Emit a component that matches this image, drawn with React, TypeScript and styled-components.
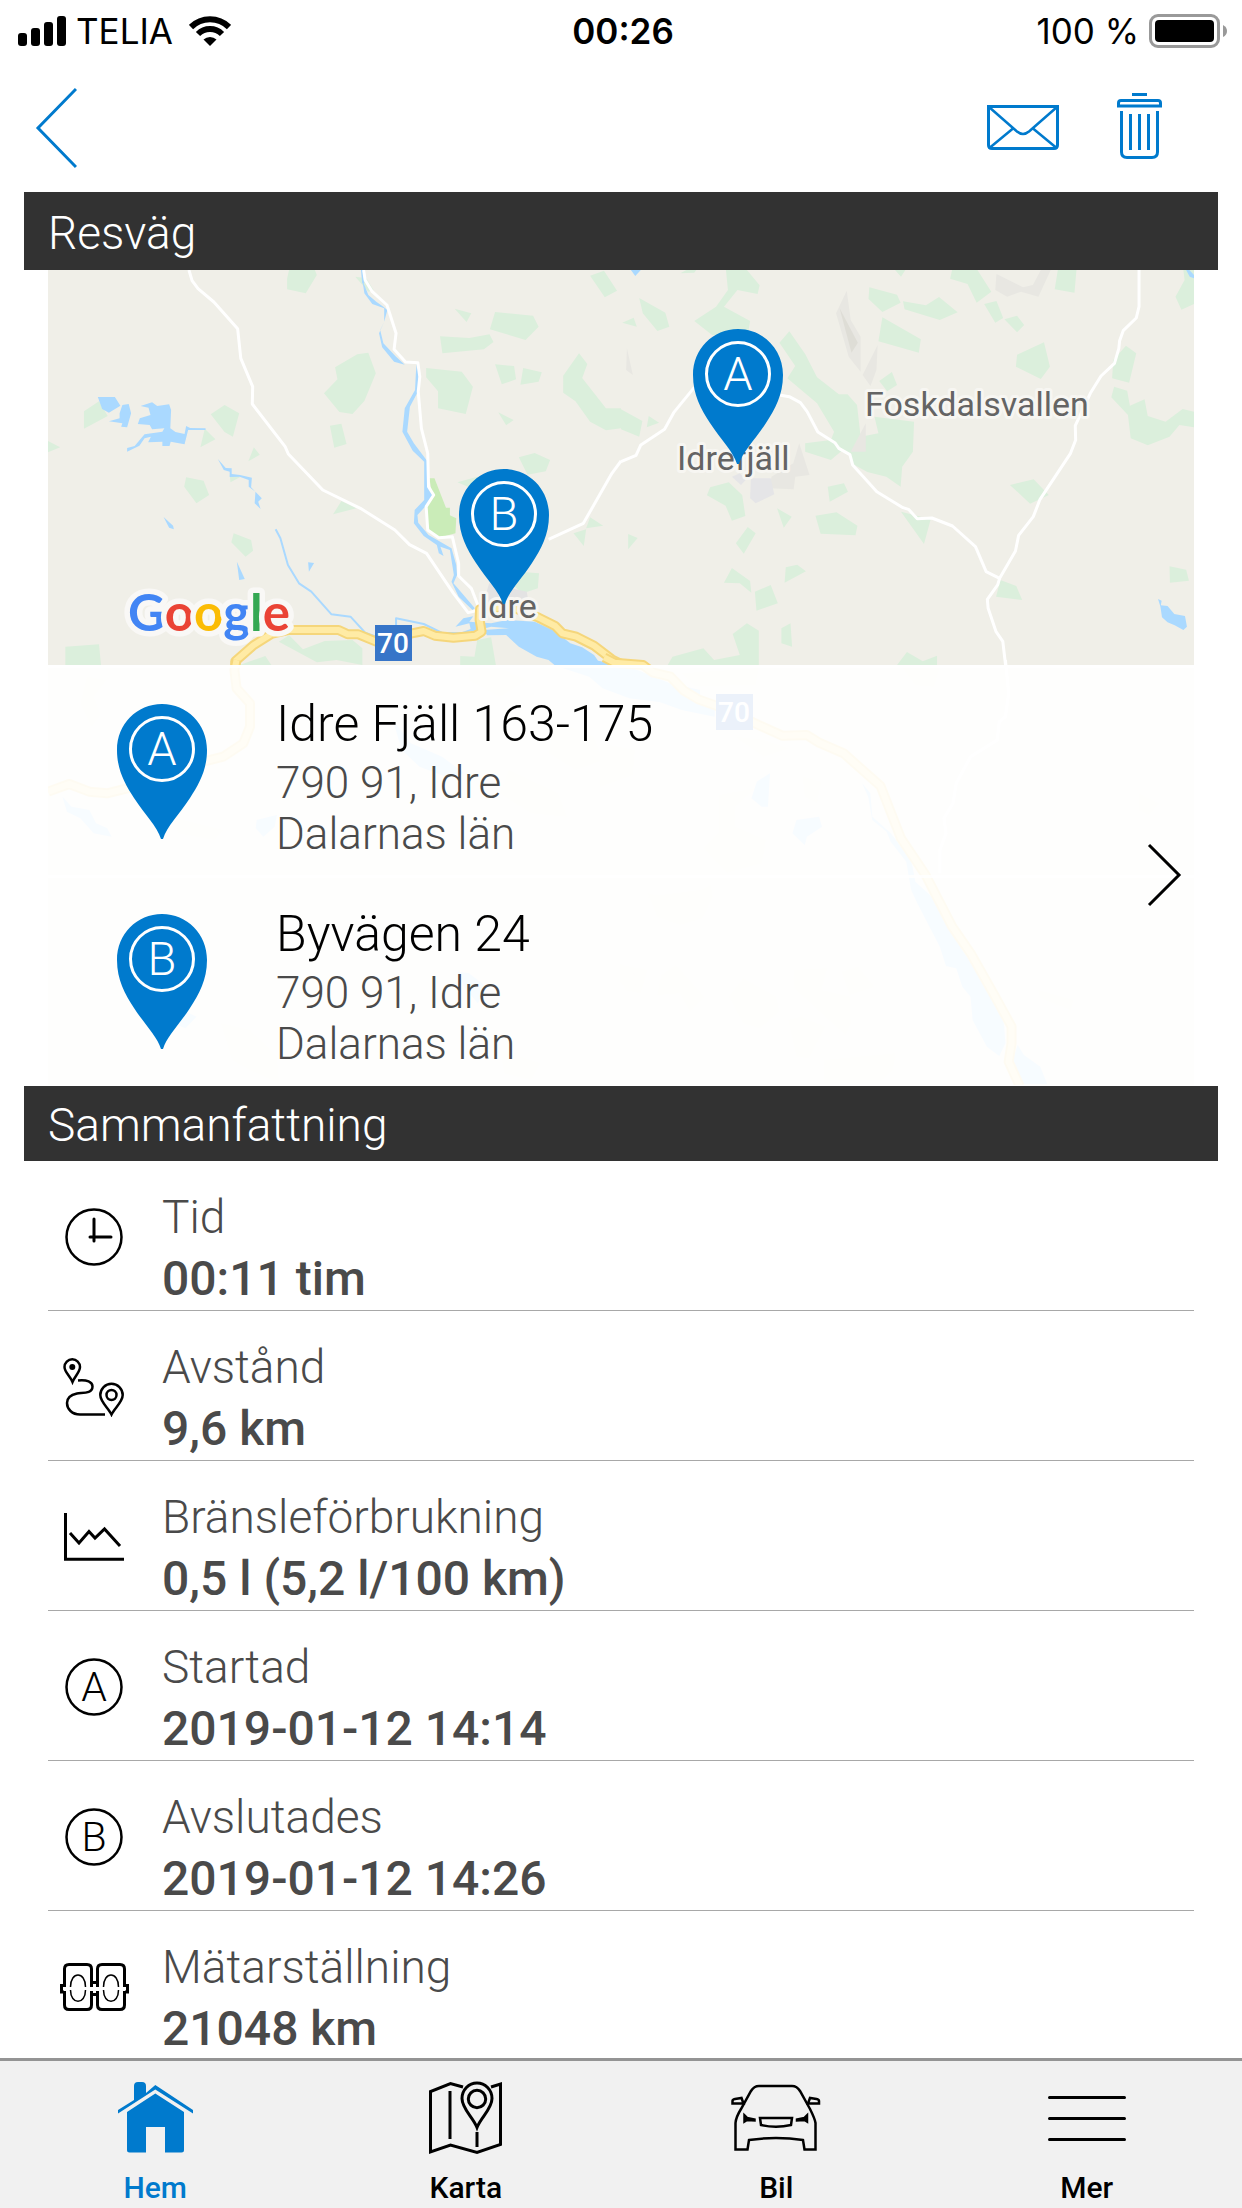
import React from "react";
import styled, { createGlobalStyle } from "styled-components";

const BLUE = "#007acd";
const LIGHT = `Roboto, "Liberation Sans", sans-serif`;
const SYSTEM = `Inter, "Liberation Sans", sans-serif`;

const GlobalStyle = createGlobalStyle`
  * { box-sizing: border-box; }
  body { margin: 0; background: #fff; font-family: ${LIGHT}; }
  h2, p, dl, dt, dd, ul { margin: 0; padding: 0; }
`;

const Screen = styled.div`
  display: flex;
  flex-direction: column;
  height: 100vh;
  overflow: hidden;
`;

const StatusBar = styled.div`
  display: grid;
  grid-template-columns: 1fr auto 1fr;
  align-items: center;
  flex: none;
  height: 62px;
  padding: 0 14px 0 18px;
  font: 400 35px/40px ${SYSTEM};
  color: #000;
`;

const StatusGroup = styled.div<{ $end?: boolean }>`
  display: flex;
  align-items: center;
  justify-content: ${(p) => (p.$end ? "flex-end" : "flex-start")};
  gap: 10px;
`;

const Carrier = styled.span`
  padding-right: 6px;
`;

const Clock = styled.time`
  font-weight: 600;
`;

const Toolbar = styled.header`
  display: flex;
  align-items: center;
  justify-content: space-between;
  flex: none;
  height: 130px;
  padding: 0 70px 0 24px;
`;

const ToolbarActions = styled.div`
  display: flex;
  gap: 36px;
`;

const IconButton = styled.button<{ $color?: string }>`
  display: flex;
  align-items: center;
  justify-content: center;
  min-width: 60px;
  height: 90px;
  padding: 0 10px;
  border: 0;
  background: none;
  color: ${(p) => p.$color ?? BLUE};
`;

const Content = styled.main`
  flex: 1;
  min-height: 0;
  overflow-y: auto;
  scrollbar-width: none;
  padding: 0 24px;
`;

const SectionTitle = styled.h2<{ $height: number }>`
  height: ${(p) => p.$height}px;
  padding: 0 24px;
  background: #323232;
  color: #fff;
  font-weight: 300;
  font-size: 46px;
  line-height: ${(p) => p.$height + 4}px;
`;

const RouteCard = styled.section`
  position: relative;
  margin: 0 24px 1px;
  padding-top: 395px;
  overflow: hidden;
`;

const MapArt = styled.svg`
  position: absolute;
  inset: 0;
  width: 100%;
  height: 100%;
`;

const StopArea = styled.div`
  position: relative;
  display: grid;
  grid-template-columns: 1fr auto;
  align-items: center;
`;

const StopList = styled.ul`
  grid-area: 1 / 1 / 2 / 3;
  list-style: none;
`;

const Stop = styled.li`
  display: flex;
  align-items: center;
  gap: 69px;
  height: 210px;
  padding-left: 69px;
  border-top: 3px solid rgba(255, 255, 255, 0.8);
  background: rgba(255, 255, 255, 0.9);
`;

const StopText = styled.div`
  padding-top: 7px;
`;

const Street = styled.p`
  font-weight: 300;
  font-size: 50px;
  line-height: 68px;
  color: #000;
`;

const Locality = styled.p`
  font-weight: 300;
  font-size: 44px;
  line-height: 51px;
  color: #4a4a4a;
`;

const OpenRoute = styled(IconButton)`
  grid-area: 1 / 2 / 2 / 3;
  padding-right: 9px;
`;

const Summary = styled.dl`
  margin: 0 24px;
`;

const SummaryRow = styled.div`
  display: grid;
  grid-template-columns: 92px 1fr;
  column-gap: 22px;
  align-items: center;
  height: 150px;
  border-bottom: 1px solid #a8a8a8;
`;

const RowIcon = styled.div`
  display: flex;
  justify-content: center;
  padding-top: 3px;
`;

const RowText = styled.div`
  padding-top: 25px;
  line-height: 61px;
  color: #4a4a4a;
`;

const Label = styled.dt`
  font-weight: 300;
  font-size: 46px;
`;

const Value = styled.dd`
  font-weight: 500;
  font-size: 48px;
`;

const TabBar = styled.nav`
  display: grid;
  grid-template-columns: repeat(4, 1fr);
  flex: none;
  height: 150px;
  border-top: 3px solid #949494;
  background: #f1f1f1;
`;

const Tab = styled.a<{ $active?: boolean }>`
  display: flex;
  flex-direction: column;
  align-items: center;
  gap: 15px;
  padding-top: 20px;
  color: ${(p) => (p.$active ? BLUE : "#000")};
  font-weight: 500;
  font-size: 30px;
  line-height: 36px;
  text-decoration: none;
`;

type Glyph = { w: number; h: number; sw?: number; children: React.ReactNode };

const Line = ({ w, h, sw = 3, children }: Glyph) => (
  <svg width={w} height={h} viewBox={`0 0 ${w} ${h}`} fill="none" stroke="currentColor" strokeWidth={sw} aria-hidden="true">
    {children}
  </svg>
);

const PinShape = ({ letter }: { letter: string }) => (
  <>
    <path
      d="M45 0C20 0 0 20 0 46C0 66 8 80 17 94C28 111 40 122 44 135H46C50 122 62 111 73 94C82 80 90 66 90 46C90 20 70 0 45 0Z"
      fill={BLUE}
    />
    <circle cx="45" cy="45" r="31.5" fill="none" stroke="#fff" strokeWidth="3" />
    <text x="45" y="61" textAnchor="middle" fill="#fff" fontFamily="Roboto, sans-serif" fontWeight="300" fontSize="47">
      {letter}
    </text>
  </>
);

const Pin = ({ letter }: { letter: string }) => (
  <svg width="90" height="135" viewBox="0 0 90 135" aria-hidden="true">
    <PinShape letter={letter} />
  </svg>
);

const LetterBadge = ({ letter }: { letter: string }) => (
  <svg width="58" height="58" viewBox="0 0 58 58" aria-hidden="true">
    <circle cx="29" cy="29" r="27.5" fill="none" stroke="#000" strokeWidth="2.5" />
    <text x="29" y="43" textAnchor="middle" fontFamily="Roboto, sans-serif" fontWeight="300" fontSize="41">
      {letter}
    </text>
  </svg>
);

const RouteMap = () => (
  <MapArt viewBox="0 0 1146 815" preserveAspectRatio="xMidYMid slice" role="img" aria-label="Karta över resvägen">
    <rect width="1146" height="815" fill="#f0efe8" />

    {/* north-west sheet */}
    <g transform="translate(-48 -10) scale(.39605 .33333)">
      <g fill="#dbefdc">
        <path d="M730 30H795L800 45L772 100L725 88V55ZM897 50L925 55L943 90L930 95ZM1490 47L1525 32L1558 92L1527 112ZM1148 146L1190 160L1178 186ZM1250 156L1346 167L1360 200L1327 240L1237 208ZM1111 229L1185 234L1236 223L1246 246L1222 268L1117 280ZM846 322L902 283L930 278L949 340L920 423L890 462L857 456L818 400L852 358ZM1076 324L1166 335L1194 380L1176 462L1106 445V394L1076 352ZM1250 313L1298 318L1303 358L1267 373ZM1321 324L1368 337L1360 365L1314 374ZM1462 280L1483 312L1470 354L1530 445H1568V505L1530 511L1490 485L1453 424L1422 398V347ZM1258 457L1297 480L1278 496ZM833 497L862 491L875 552L844 563ZM532 463L567 435L604 460L588 530L567 516ZM517 506L544 538L506 562ZM212 454L250 424L272 468L212 506ZM121 543L152 562L121 577ZM641 562L656 584L627 604ZM470 652L514 662L528 705L496 730L465 680ZM862 723L900 745L841 763ZM590 820L634 840L639 872L620 890L584 847ZM165 1160L250 1153L255 1215H165ZM704 1145L730 1126L765 1168L820 1143L890 1140L915 1165V1215L850 1200L800 1207ZM605 1215L670 1188L685 1215ZM1162 1188L1198 1190L1205 1140L1240 1132L1252 1215H1162ZM1310 592L1350 579L1389 600L1378 634L1332 644ZM1155 667L1205 650L1200 690ZM1490 772L1523 797L1480 805ZM1448 820L1480 808L1474 858ZM1320 936L1361 940L1358 985L1320 1000L1300 980ZM580 645L608 650L582 667Z" />
      </g>
      <path d="M1084 655H1097L1126 743H1136V766L1152 775L1150 820L1108 833L1082 815L1074 750L1092 705Z" fill="#caecb8" />
      <path d="M1235 970L1330 995L1335 1030L1220 1030Z" fill="#e3e3e3" />
      <g fill="#aad9ff">
        <path d="M247 411H290L304 437L275 458L258 447ZM309 435L325 432L331 460L321 502L306 500L309 490L275 484L302 475V460ZM355 438L384 427L397 438L427 433L432 450L430 505L443 516L466 522L470 498L480 504L519 505V510H475L466 553L431 545L428 558H410V545L374 547L381 530L365 535L352 557L321 575V564L340 558L365 523L410 515L415 505L384 508L378 495L348 492L353 475L380 465L375 443Z" />
        <path d="M550 597L570 624L585 625V642L606 645L636 653L634 682L661 715L652 725L658 747L643 730L645 695L628 680V660L605 650L580 651V635L565 630ZM413 771L437 797L439 808L427 803ZM598 905L618 957L604 960ZM778 907L793 909L780 935Z" />
        <path d="M915 60L930 105L950 125L968 140L978 150L970 185L960 210L968 250L1000 290L1022 314L995 305L965 262L957 220L970 185L970 145L940 132L920 100Z" />
        <path d="M1052 312L1058 340L1055 395L1035 440L1028 515L1045 550L1080 605L1079 670L1095 704L1075 738L1054 765L1056 788L1082 825L1140 865L1152 915L1154 945L1145 970L1199 1045L1193 1050L1158 1010L1140 965L1146 945L1136 870L1112 860L1120 888L1108 880L1103 855L1070 828L1045 790L1047 750L1071 720V605L1042 572L1016 515L1022 445L1048 390L1050 340Z" />
        <path d="M1150 1100L1170 1075L1195 1069L1185 1085L1240 1090L1280 1080L1350 1085L1400 1112L1440 1150L1470 1162L1500 1185L1510 1202L1568 1215H1400L1385 1200L1355 1190L1310 1160L1278 1125L1230 1126L1220 1110L1285 1105L1240 1100L1190 1115L1185 1090Z" />
      </g>
      <g fill="none" stroke="#aad9ff" strokeWidth="2" strokeLinejoin="round">
        {["M914 30L917 70", "M696 808L708 835L727 915L755 970L786 995L837 1063L885 1070L922 1118L950 1130", "M1000 1097V1075L1070 1092L1115 1118L1165 1120L1200 1105"].map((d) => (
          <path key={d} d={d} vectorEffect="non-scaling-stroke" />
        ))}
      </g>
      <g fill="none" stroke="#fff" strokeWidth="3" strokeLinejoin="round">
        {[
          "M477 30L485 62L500 86L540 126L600 206L608 295L638 380L637 432L720 560L728 582L815 690L910 745L997 810L1034 854L1077 880L1145 1000L1182 1058L1210 1050",
          "M918 30L922 60L940 95L977 135L1000 220L995 268L1024 306L1055 308L1060 350L1056 395L1064 505L1080 580L1082 680L1095 705L1076 740L1080 810L1108 833L1142 830L1158 910V948L1190 985L1208 1040",
          "M1385 838L1473 790L1545 640L1568 603",
        ].map((d) => (
          <path key={d} d={d} vectorEffect="non-scaling-stroke" />
        ))}
      </g>
      {[
        ["#f5d67b", 10],
        ["#ffeba5", 6],
      ].map(([color, width]) => (
        <g key={color} fill="none" stroke={color} strokeWidth={width} strokeLinejoin="round">
          <path d="M594 1220V1204L640 1156L685 1122L730 1110H855L878 1123H905L950 1145L1040 1120L1070 1113L1098 1127L1145 1133L1200 1127L1216 1115L1211 1080L1212 1048L1290 1040L1360 1073L1402 1098L1420 1120L1455 1130L1500 1157L1545 1198L1568 1212" vectorEffect="non-scaling-stroke" />
        </g>
      ))}
    </g>

    {/* north-east sheet */}
    <g transform="translate(573 -10) scale(.39605 .33333)">
      <path d="M265 30H318L350 76L345 102L294 90L260 140L326 183L320 225L230 225L185 183L240 140L270 90ZM46 114L112 158L122 200L92 213L55 160ZM150 40L165 30H190L185 38ZM3 188L32 173L40 200ZM0 448L54 483L46 530L0 508ZM70 468L96 488L65 502ZM692 30H718L707 50ZM836 30H900L935 95L898 128L875 72L831 56ZM1103 30H1150L1145 98L1095 88ZM627 82L697 104L706 128L660 156L625 117ZM712 124L770 136L803 111L850 157L805 180L716 148ZM917 132L948 123L965 174L945 188ZM968 178L1000 167L1018 195L1000 217ZM660 172L757 238L752 278L650 244ZM1420 30H1447V132L1415 149L1400 110L1423 60ZM1000 284L1068 247L1083 320L1060 357L997 320ZM1275 257L1301 280L1283 368L1240 355L1243 300ZM652 363L684 336L697 375L672 394ZM425 214L465 282L495 352L550 403H572L596 435L605 530L650 520L640 470L740 485L737 575L710 620L706 680L670 650L622 636L585 612L575 582L530 540L538 515L495 430L420 355L440 318L400 248ZM465 550L530 540L560 570L530 600L465 575ZM1245 380L1278 392L1285 437L1322 418L1330 468L1375 485L1418 447L1447 455V502L1410 495L1385 530L1330 556L1287 535L1280 465L1238 412ZM225 682L272 667L306 705L314 768L280 782L264 737L217 706ZM522 680L563 670L573 695L527 725ZM982 675L1042 658L1080 705L1033 731ZM394 745L431 770L411 803ZM491 767L544 757L597 797L592 826L504 821ZM707 755L782 778L765 852ZM320 801L340 820L310 881L290 850ZM18 822L42 834L18 868ZM445 914L467 934L413 968L416 922ZM280 924L326 963L329 998L300 970L260 968ZM338 995L378 975L396 1030L342 1052ZM958 960L998 978L1013 1020L947 1010ZM1385 919L1427 929L1434 962L1386 968ZM428 1090L432 1160L405 1150V1105ZM318 1090L348 1112V1215H118L130 1190L208 1165L235 1200L300 1185L282 1122ZM722 1176L762 1204L798 1187V1215H697Z" fill="#dbefdc" />
      <path d="M570 92L580 180L605 230V335L575 290L543 160ZM948 42L1015 82L1040 75L1060 30H1085L1054 110L1010 95L975 110L945 90ZM648 255L645 330L630 378L610 345ZM15 265L30 345L13 330ZM450 550L476 645L440 650L436 688L375 685L380 650L435 610ZM618 490V575H580Z" fill="#e8e7e2" />
      <path d="M552 145L598 248L582 278Z" fill="#deddd6" />
      <path d="M328 655H378L387 703L340 730L326 715ZM280 650L300 640L315 660L303 675Z" fill="#e5e5e7" />
      <path d="M25 30H50L36 48ZM1427 30H1435L1447 45V55L1436 50ZM1356 1017L1365 1022L1363 1036L1380 1038L1397 1062L1424 1068L1429 1100L1420 1110L1398 1096L1380 1087L1366 1072L1362 1040Z" fill="#aad9ff" />
      <g fill="none" stroke="#fff" strokeWidth="3" strokeLinejoin="round">
        {[
          "M0 605L38 586L50 555L110 508L133 458L185 382",
          "M400 405L425 410L453 428L470 455L497 516L540 548L550 565L578 584L585 615L646 695L712 743L726 748L748 776L785 774L837 798L895 860L922 935L956 955",
          "M1308 30V140L1301 174L1268 212L1259 242L1257 265L1246 310L1212 348L1185 400L1147 497L1148 540L1135 580L1058 718L1041 770L1004 826L996 873L956 955L951 975L925 1018L927 1045L947 1115L964 1144L971 1215",
        ].map((d) => (
          <path key={d} d={d} vectorEffect="non-scaling-stroke" />
        ))}
      </g>
    </g>

    {/* south-west sheet */}
    <g transform="translate(-48 390) scale(.44643 .33333)">
      <path d="M195 50L238 60L210 110L225 165L205 200L180 130ZM1050 20L1130 30L1180 60L1120 110L1050 60ZM1240 180L1330 230L1350 300L1290 330L1230 280ZM1140 330L1250 400L1270 470L1190 460L1120 400ZM380 470L500 510L480 540L400 520ZM495 1090L560 1110L620 1190L625 1270L560 1230L520 1200ZM1390 915L1450 930L1435 1000L1400 990ZM1450 710L1568 690V770L1500 760ZM1120 1170L1210 1210L1190 1260L1130 1240Z" fill="#efeddd" />
      <path d="M140 410L160 440L200 450L215 490L240 505L250 530L210 520L180 475L150 455ZM575 480L620 465L615 500L590 530L573 505ZM880 180L920 250L990 290L1040 340L1000 350L940 320L900 270ZM1025 935L1050 940L1090 980L1070 1030L1040 980ZM400 1045L440 1070L415 1105L390 1090ZM1240 15H1400L1500 70L1568 90V160L1500 130L1410 115L1350 85L1320 50Z" fill="#aad9ff" />
      {[
        ["#f5d67b", 10],
        ["#ffeba5", 6],
      ].map(([color, width]) => (
        <path key={color} d="M530 0L525 30L530 85L560 130V200L545 250L500 290L440 310L330 370L240 400L200 395L155 372L108 395" fill="none" stroke={color} strokeWidth={width} strokeLinejoin="round" vectorEffect="non-scaling-stroke" />
      ))}
    </g>

    {/* south-east sheet */}
    <g transform="translate(552 390) scale(.4095 .33333)">
      <path d="M200 40L387 25L380 75L230 78ZM740 25H830L815 80L770 75ZM330 230L400 240L460 265L400 290ZM290 405L380 385L330 440V500L405 540L395 610L310 638L253 565L290 520ZM495 350L540 365L530 430L500 410ZM117 700L195 725L270 675L275 710L250 775L195 795L140 770ZM50 910L90 950L82 995L50 970ZM185 915L255 1010L220 1055L195 1000L140 1005L150 945ZM350 955L430 1010L438 1055L390 1105L350 1090L315 1010ZM475 930L555 925L540 990L610 1010L612 1090L600 1125L550 1070L475 985ZM590 935L630 920L670 980L610 1005ZM460 1080L490 1070L550 1100L510 1195L480 1190ZM548 1200L722 1180L715 1230L680 1270H548ZM1070 990L1155 1020L1150 1050L1075 1015ZM1315 400L1365 430L1340 465L1315 450ZM0 250L85 270L80 345L0 380Z" fill="#efeddd" />
      <path d="M0 15L60 45L130 55L195 95L280 130V170L200 150L110 110L90 85L0 60ZM415 340L410 440L395 440L370 415L383 365ZM480 480L535 470L542 500L505 530L500 555L470 520ZM640 370L660 400L665 470L710 520L760 600L770 665L810 710L850 800L885 870L940 970L985 1070L990 1150L975 1188L945 1160L910 1080L905 1010L885 980L870 925L845 918L830 860L775 730L760 690L748 605L710 545L700 515L665 480L655 410ZM1020 1155L1035 1185L1075 1220L1092 1272H1030L1005 1210Z" fill="#aad9ff" />
      <path d="M990 0L998 100L990 170L975 185L970 240L905 290L870 370L862 430L840 475L845 520L830 570V640" fill="none" stroke="#fff" strokeWidth="3" vectorEffect="non-scaling-stroke" />
      {[
        ["#f5d67b", 10],
        ["#ffeba5", 6],
      ].map(([color, width]) => (
        <path key={color} d="M10 -8L35 8L105 15L130 38L172 50L205 92L240 118L290 140L375 188L445 227L505 225L535 248L595 280L685 378L735 535L795 645L860 800L905 880L965 1010L1005 1100V1150L998 1205L1025 1278" fill="none" stroke={color} strokeWidth={width} strokeLinejoin="round" vectorEffect="non-scaling-stroke" />
      ))}
    </g>

    <g fill="#3775c8">
      <rect x="327" y="355" width="37" height="36" />
      <rect x="668" y="424" width="37" height="36" />
    </g>
    <g fill="#fff" fontFamily="Roboto, sans-serif" fontWeight="500" fontSize="28" textAnchor="middle">
      <text x="345" y="383">70</text>
      <text x="686" y="452">70</text>
    </g>

    <g fill="#646464" stroke="#f7f6f2" strokeWidth="6" strokeLinejoin="round" paintOrder="stroke" fontFamily="Roboto, sans-serif" fontWeight="400" fontSize="34">
      <text x="817" y="146">Foskdalsvallen</text>
      <text x="629" y="200">Idrefjäll</text>
      <text x="431" y="348">Idre</text>
    </g>
    <text x="80" y="361" stroke="#f9f8f6" strokeWidth="11" strokeLinejoin="round" paintOrder="stroke" fontFamily="Lato, sans-serif" fontWeight="700" fontSize="51">
      <tspan fill="#4285f4">G</tspan>
      <tspan fill="#ea4335">o</tspan>
      <tspan fill="#fbbc05">o</tspan>
      <tspan fill="#4285f4">g</tspan>
      <tspan fill="#34a853">l</tspan>
      <tspan fill="#ea4335">e</tspan>
    </text>

    <g transform="translate(645 59)">
      <PinShape letter="A" />
    </g>
    <g transform="translate(411 199)">
      <PinShape letter="B" />
    </g>
  </MapArt>
);

const stops = [
  { letter: "A", street: "Idre Fjäll 163-175", city: "790 91, Idre", region: "Dalarnas län" },
  { letter: "B", street: "Byvägen 24", city: "790 91, Idre", region: "Dalarnas län" },
];

const summary = [
  {
    label: "Tid",
    value: "00:11 tim",
    icon: (
      <Line w={58} h={58}>
        <circle cx="29" cy="29" r="27.5" strokeWidth="2.5" />
        <path d="M29 11V33M25 29H46" strokeLinecap="round" />
      </Line>
    ),
  },
  {
    label: "Avstånd",
    value: "9,6 km",
    icon: (
      <Line w={62} h={59} sw={2.5}>
        <path d="M9.5 24C7 18 1.5 14 1.5 9A7.7 7.7 0 0 1 17 9C17 14 12 18 9.5 24Z" />
        <circle cx="9.3" cy="9" r="3" fill="currentColor" stroke="none" />
        <path d="M15 22.5C24 21.5 29.5 24 29.5 28.5C29.5 36 19 34.5 14 35.5C7 37 4 40 4 45C4 51 9 56.5 17 56.5H42" />
        <path d="M48.5 56.5C45.5 50 37.3 44 37.3 37A11.2 11.2 0 0 1 59.7 37C59.7 44 51.5 50 48.5 56.5Z" />
        <circle cx="48.5" cy="37" r="5" />
      </Line>
    ),
  },
  {
    label: "Bränsleförbrukning",
    value: "0,5 l (5,2 l/100 km)",
    icon: (
      <Line w={60} h={48}>
        <path d="M1.5 0V46.2H60" />
        <path d="M6 20L15 30L25 18.5L31 25L40.5 16L56 33" />
      </Line>
    ),
  },
  { label: "Startad", value: "2019-01-12 14:14", icon: <LetterBadge letter="A" /> },
  { label: "Avslutades", value: "2019-01-12 14:26", icon: <LetterBadge letter="B" /> },
  {
    label: "Mätarställning",
    value: "21048 km",
    icon: (
      <Line w={69} h={48}>
        <path d="M4.5 24V6Q4.5 1.5 9 1.5H27Q31.5 1.5 31.5 6V24M4.5 28V42Q4.5 46.5 9 46.5H27Q31.5 46.5 31.5 42V28M37.5 24V6Q37.5 1.5 42 1.5H60Q64.5 1.5 64.5 6V24M37.5 28V42Q37.5 46.5 42 46.5H60Q64.5 46.5 64.5 42V28" />
        <path d="M32 19.5H37M32 31.5H37M4 22.5H1.5V29H4M65 22.5H67.5V29H65" />
        <path d="M10.5 24C10.5 8 25.5 8 25.5 24M10.5 27C10.5 42 25.5 42 25.5 27M43.5 24C43.5 8 58.5 8 58.5 24M43.5 27C43.5 42 58.5 42 58.5 27" strokeWidth="1.5" />
      </Line>
    ),
  },
];

const tabs = [
  {
    label: "Hem",
    active: true,
    icon: (
      <svg width="75" height="74" viewBox="0 0 75 74" fill="currentColor" aria-hidden="true">
        <path d="M16 19V5Q16 1 20 1H24Q28 1 28 5V12L37.3 4L75 29V32.5L37.3 8.5L0 32.5V29Z" />
        <path d="M37.3 12.5L66 31V69Q66 71.5 63.5 71.5H47V46H28V71.5H11.5Q9 71.5 9 69V31Z" />
      </svg>
    ),
  },
  {
    label: "Karta",
    icon: (
      <Line w={74} h={74}>
        <path d="M34 6L21.5 2.5L1.5 10.5V71L21.5 64L48 71.5L71.5 63.5V3L62 6" />
        <path d="M21 10V58M48 51V66" />
        <path d="M48 46.5C44 36 33 28 33 17.5A15 15.5 0 0 1 63 17.5C63 28 52 36 48 46.5Z" />
        <circle cx="48" cy="18" r="8.7" />
      </Line>
    ),
  },
  {
    label: "Bil",
    icon: (
      <Line w={90} h={74} sw={2.5}>
        <path d="M28 5H61Q66 5 69 10L79 28Q84 38 84.5 42V68.5H73.5L72 59Q59 57 45 57Q31 57 18 59L16.5 68.5H4.5V42Q5 36 10 28L20 10Q23 5 28 5Z" />
        <path d="M12.5 22.5L10.5 17L4 18Q1.5 18.5 1.5 20V22.5ZM77 22.5L79 17L85.5 18Q88 18.5 88 20V22.5Z" />
        <path d="M29 37H61L60 44Q45 47.5 30 44Z" />
        <path d="M13.5 34.5L16 37L23.5 38.5V39.5L16 39L13.5 40.5ZM76 34.5L73.5 37L66 38.5V39.5L73.5 39L76 40.5Z" fill="currentColor" />
      </Line>
    ),
  },
  {
    label: "Mer",
    icon: (
      <Line w={78} h={74}>
        <path d="M1.5 16.5H76.5M1.5 37.5H76.5M1.5 58.5H76.5" strokeLinecap="round" />
      </Line>
    ),
  },
];

export default function App() {
  return (
    <>
      <GlobalStyle />
      <Screen>
        <StatusBar>
          <StatusGroup>
            <svg width="48" height="30" viewBox="0 0 48 30" aria-hidden="true">
              <rect y="17" width="9" height="13" rx="3" />
              <rect x="13" y="12" width="9" height="18" rx="3" />
              <rect x="26" y="6" width="9" height="24" rx="3" />
              <rect x="39" width="9" height="30" rx="3" />
            </svg>
            <Carrier>TELIA</Carrier>
            <svg width="42" height="30" viewBox="0 0 42 30" aria-hidden="true">
              <path d="M2 11A27 27 0 0 1 40 11M9 18A17 17 0 0 1 33 18" fill="none" stroke="#000" strokeWidth="6" />
              <path d="M21 30L14.5 23.5A9.5 9.5 0 0 1 27.5 23.5Z" />
            </svg>
          </StatusGroup>
          <Clock>00:26</Clock>
          <StatusGroup $end>
            <span>100 %</span>
            <svg width="79" height="34" viewBox="0 0 79 34" aria-hidden="true">
              <rect x="1.5" y="1.5" width="68" height="31" rx="7.5" fill="none" stroke="#999" strokeWidth="3" />
              <rect x="6" y="6" width="59" height="22" rx="4" />
              <path d="M74 11Q78 13 78 17Q78 21 74 23Z" fill="#999" />
            </svg>
          </StatusGroup>
        </StatusBar>

        <Toolbar>
          <IconButton aria-label="Tillbaka">
            <Line w={43} h={84}>
              <path d="M42 4L4 43L42 82" />
            </Line>
          </IconButton>
          <ToolbarActions>
            <IconButton aria-label="Skicka">
              <Line w={74} h={45}>
                <path d="M1.5 1.5H70.5V40Q70.5 43.5 67 43.5H5Q1.5 43.5 1.5 40Z" />
                <path d="M2 2L30 26.5Q36 31.5 42 26.5L70 2M3 42.5L26 23.5M69 42.5L46 23.5" strokeWidth="2.5" />
              </Line>
            </IconButton>
            <IconButton aria-label="Ta bort">
              <Line w={45} h={70}>
                <path d="M15 2.5H30M1.5 14V11Q1.5 8.5 4 8.5H41Q43.5 8.5 43.5 11V14ZM4.5 19V60Q4.5 65.5 10 65.5H35Q40.5 65.5 40.5 60V19" />
                <path d="M13.5 22V58M22.5 22V58M31.5 22V58" />
              </Line>
            </IconButton>
          </ToolbarActions>
        </Toolbar>

        <Content>
          <SectionTitle $height={78}>Resväg</SectionTitle>
          <RouteCard>
            <RouteMap />
            <StopArea>
              <StopList>
                {stops.map((s) => (
                  <Stop key={s.letter}>
                    <Pin letter={s.letter} />
                    <StopText>
                      <Street>{s.street}</Street>
                      <Locality>{s.city}</Locality>
                      <Locality>{s.region}</Locality>
                    </StopText>
                  </Stop>
                ))}
              </StopList>
              <OpenRoute $color="#000" aria-label="Visa resvägen">
                <Line w={35} h={64}>
                  <path d="M2 2L32 32L2 62" />
                </Line>
              </OpenRoute>
            </StopArea>
          </RouteCard>

          <SectionTitle $height={75}>Sammanfattning</SectionTitle>
          <Summary>
            {summary.map((row) => (
              <SummaryRow key={row.label}>
                <RowIcon>{row.icon}</RowIcon>
                <RowText>
                  <Label>{row.label}</Label>
                  <Value>{row.value}</Value>
                </RowText>
              </SummaryRow>
            ))}
          </Summary>
        </Content>

        <TabBar>
          {tabs.map((tab) => (
            <Tab key={tab.label} href="#" $active={tab.active} aria-current={tab.active ? "page" : undefined}>
              {tab.icon}
              {tab.label}
            </Tab>
          ))}
        </TabBar>
      </Screen>
    </>
  );
}
